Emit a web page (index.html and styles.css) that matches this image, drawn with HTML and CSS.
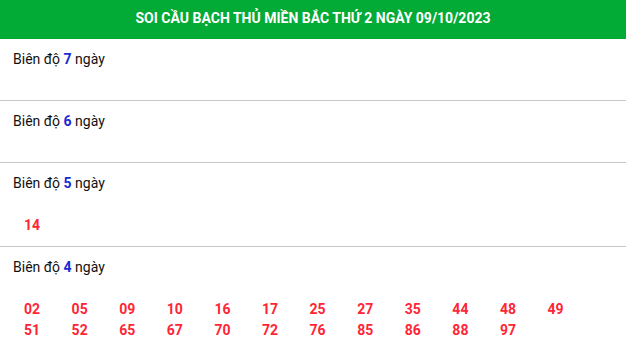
FILE: index.html
```html
<!DOCTYPE html>
<html lang="vi">
<head>
<meta charset="utf-8">
<title>Soi cầu bạch thủ</title>
<link rel="stylesheet" href="styles.css">
</head>
<body>
<div class="box">
  <h2 class="title">SOI CẦU BẠCH THỦ MIỀN BẮC THỨ 2 NGÀY 09/10/2023</h2>
  <div class="section">
    <div class="label">Biên độ <b class="num">7</b> ngày</div>
    <div class="nums"></div>
  </div>
  <div class="section">
    <div class="label">Biên độ <b class="num">6</b> ngày</div>
    <div class="nums"></div>
  </div>
  <div class="section">
    <div class="label">Biên độ <b class="num">5</b> ngày</div>
    <div class="nums"><span>14</span></div>
  </div>
  <div class="section">
    <div class="label">Biên độ <b class="num">4</b> ngày</div>
    <div class="nums"><span>02</span><span>05</span><span>09</span><span>10</span><span>16</span><span>17</span><span>25</span><span>27</span><span>35</span><span>44</span><span>48</span><span>49</span><span>51</span><span>52</span><span>65</span><span>67</span><span>70</span><span>72</span><span>76</span><span>85</span><span>86</span><span>88</span><span>97</span></div>
  </div>
</div>
</body>
</html>
```
FILE: styles.css
```css
* { box-sizing: border-box; }
body {
  margin: 0;
  background: #fff;
  font-family: Roboto, "Liberation Sans", Arial, sans-serif;
  color: #111;
}
.box { width: 626px; }
.title {
  margin: 0;
  height: 39px;
  background: #02aa36;
  color: #fff;
  font-size: 14px;
  font-weight: 700;
  line-height: 37px;
  text-align: center;
}
.section {
  padding: 10px 0 10px 13px;
  border-bottom: 1px solid #c8c8c8;
}
.label {
  font-size: 14px;
  line-height: 21px;
}
.num {
  color: #1a2bd4;
  font-weight: 700;
}
.nums {
  display: grid;
  grid-template-columns: repeat(12, 47.6px);
  padding: 21px 0 0 11px;
  font-size: 14px;
  font-weight: 700;
  line-height: 21px;
  color: #ff2535;
}
.nums:empty { padding-top: 20px; }
```
